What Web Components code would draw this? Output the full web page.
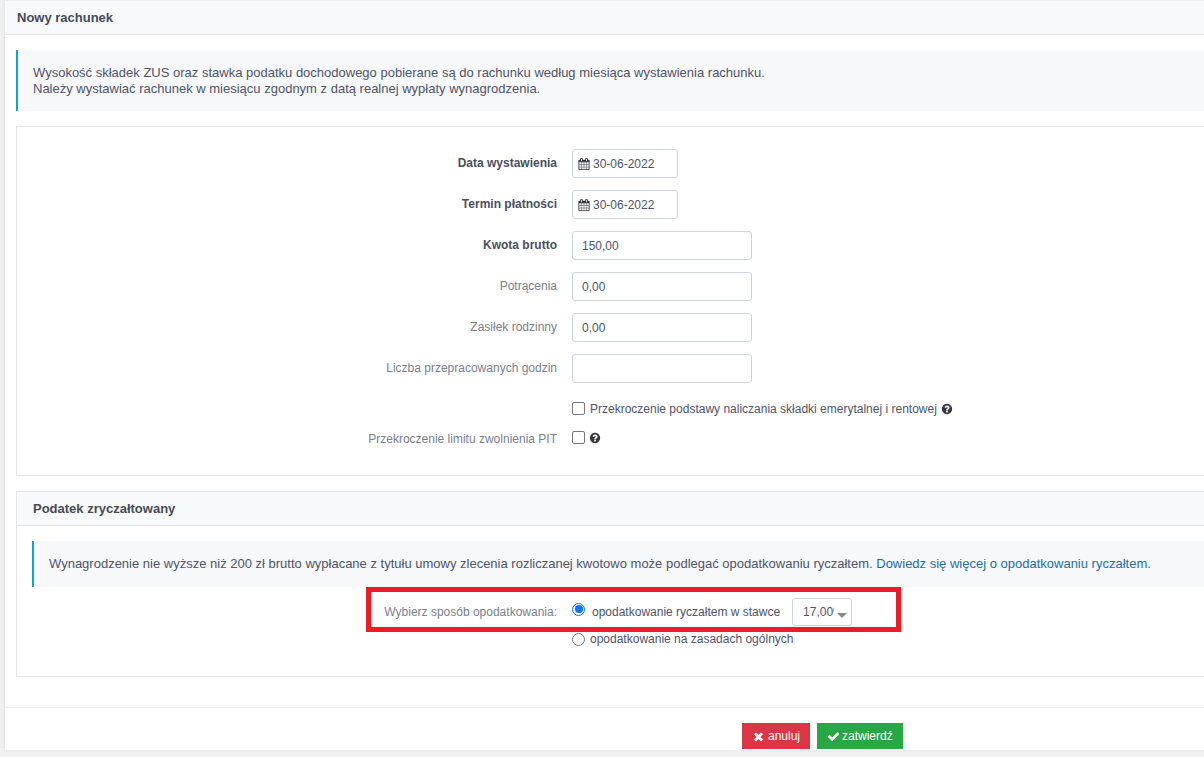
<!DOCTYPE html>
<html lang="pl">
<head>
<meta charset="utf-8">
<title>Nowy rachunek</title>
<style>
  html, body { margin: 0; height: 100%; overflow: hidden; background: #f0f0f0; }
  body { font: 12px "Liberation Sans", Arial, sans-serif; color: #4f5467; }
  a { color: #1f6f9f; text-decoration: none; }
</style>
</head>
<body>
<rachunek-card>
  <span slot="title">Nowy rachunek</span>
  <info-box style="margin-bottom:15px">Wysokość składek ZUS oraz stawka podatku dochodowego pobierane są do rachunku według miesiąca wystawienia rachunku.<br>Należy wystawiać rachunek w miesiącu zgodnym z datą realnej wypłaty wynagrodzenia.</info-box>

  <form-panel>
    <form-row label="Data wystawienia" strong><text-field date width="106">30-06-2022</text-field></form-row>
    <form-row label="Termin płatności" strong><text-field date width="106">30-06-2022</text-field></form-row>
    <form-row label="Kwota brutto" strong><text-field>150,00</text-field></form-row>
    <form-row label="Potrącenia"><text-field>0,00</text-field></form-row>
    <form-row label="Zasiłek rodzinny"><text-field>0,00</text-field></form-row>
    <form-row label="Liczba przepracowanych godzin"><text-field></text-field></form-row>
    <form-row check style="margin-top:18px"><check-box>Przekroczenie podstawy naliczania składki emerytalnej i rentowej</check-box></form-row>
    <form-row label="Przekroczenie limitu zwolnienia PIT" check last><check-box></check-box></form-row>
  </form-panel>

  <form-panel heading="Podatek zryczałtowany" style="margin-top:15px">
    <info-box compact>Wynagrodzenie nie wyższe niż 200 zł brutto wypłacane z tytułu umowy zlecenia rozliczanej kwotowo może podlegać opodatkowaniu ryczałtem. <a href="#">Dowiedz się więcej o opodatkowaniu ryczałtem.</a></info-box>
    <tax-choice></tax-choice>
  </form-panel>

  <action-button slot="footer" kind="cancel">anuluj</action-button>
  <action-button slot="footer" kind="ok">zatwierdź</action-button>
</rachunek-card>

<script>
(function () {
  const ICONS = {
    calendar: 'M192 1664h288v-288h-288v288zm352 0h320v-288h-320v288zm-352-352h288v-320h-288v320zm352 0h320v-320h-320v320zm-352-384h288v-288h-288v288zm736 736h320v-288h-320v288zm-384-736h320v-288h-320v288zm768 736h288v-288h-288v288zm-384-352h320v-320h-320v320zm-352-864v-288q0-13-9.5-22.5t-22.5-9.5h-64q-13 0-22.5 9.5t-9.5 22.5v288q0 13 9.5 22.5t22.5 9.5h64q13 0 22.5-9.5t9.5-22.5zm736 864h288v-320h-288v320zm-384-384h320v-288h-320v288zm384 0h288v-288h-288v288zm32-480v-288q0-13-9.5-22.5t-22.5-9.5h-64q-13 0-22.5 9.5t-9.5 22.5v288q0 13 9.5 22.5t22.5 9.5h64q13 0 22.5-9.5t9.5-22.5zm384-64v1280q0 52-38 90t-90 38h-1408q-52 0-90-38t-38-90v-1280q0-52 38-90t90-38h128v-96q0-66 47-113t113-47h64q66 0 113 47t47 113v96h384v-96q0-66 47-113t113-47h64q66 0 113 47t47 113v96h128q52 0 90 38t38 90z',
    question: 'M1024 1376v-192q0-14-9-23t-23-9h-192q-14 0-23 9t-9 23v192q0 14 9 23t23 9h192q14 0 23-9t9-23zm256-672q0-88-55.5-163t-138.5-116-170-41q-243 0-371 213-15 24 8 42l132 100q7 6 19 6 16 0 25-12 53-68 86-92 34-24 86-24 48 0 85.5 26t37.5 59q0 38-20 61t-68 45q-63 28-115.5 86.5t-52.5 125.5v36q0 14 9 23t23 9h192q14 0 23-9t9-23q0-19 21.5-49.5t54.5-49.5q32-18 49-28.5t46-35 44.5-48 28-60.5 12.5-81zm384 192q0 209-103 385.5t-279.5 279.5-385.5 103-385.5-103-279.5-279.5-103-385.5 103-385.5 279.5-279.5 385.5-103 385.5 103 279.5 279.5 103 385.5z',
    times: 'M1490 1322q0 40-28 68l-136 136q-28 28-68 28t-68-28l-294-294-294 294q-28 28-68 28t-68-28l-136-136q-28-28-28-68t28-68l294-294-294-294q-28-28-28-68t28-68l136-136q28-28 68-28t68 28l294 294 294-294q28-28 68-28t68 28l136 136q28 28 28 68t-28 68l-294 294 294 294q28 28 28 68z',
    check: 'M1671 566q0 40-28 68l-724 724-136 136q-28 28-68 28t-68-28l-136-136-362-362q-28-28-28-68t28-68l136-136q28-28 68-28t68 28l294 295 656-657q28-28 68-28t68 28l136 136q28 28 28 68z',
  }
  const icon = (name, size, color) =>
    `<svg width="${size}" height="${size}" viewBox="0 0 1792 1792" style="flex:none;display:block" aria-hidden="true"><path fill="${color || 'currentColor'}" d="${ICONS[name]}"/></svg>`

  class Base extends HTMLElement {
    constructor() {
      super()
      this.attachShadow({ mode: 'open' })
    }
    connectedCallback() { this.shadowRoot.innerHTML = this.render() }
  }

  class RachunekCard extends Base {
    render() {
      return `
        <style>
          :host { display:block; box-sizing:border-box; width:1230px; height:749px; margin:1px 0 0 5px; background:#fff; position:relative; overflow:hidden; box-shadow:-1px 0 3px rgba(0,0,0,.05); }
          .head { height:33px; display:flex; align-items:center; padding-left:12px; background:#f8f9fa; border-bottom:1px solid #e4e4e4; font-weight:700; color:#454a56; font-size:13px; }
          .body { padding:15px 11px 0; }
          .foot { position:absolute; left:0; right:0; top:706px; height:43px; border-top:1px solid #eeeeee; display:flex; gap:7px; padding:15px 0 0 737px; box-sizing:border-box; }
          .mark { position:absolute; left:361px; top:586px; width:535px; height:45px; box-sizing:border-box; border:5px solid #ed1c24; pointer-events:none; }
        </style>
        <div class="head"><slot name="title"></slot></div>
        <div class="body"><slot></slot></div>
        <div class="foot"><slot name="footer"></slot></div>
        <div class="mark"></div>`
    }
  }

  class InfoBox extends Base {
    render() {
      const compact = this.hasAttribute('compact')
      return `
        <style>
          :host { display:block; box-sizing:border-box; background:#f7f8fa; border-left:2px solid #0aa5e0; color:#4f5467; font-size:13px; line-height:16px; padding:15px; height:${compact ? 46 : 61}px; }
        </style>
        <slot></slot>`
    }
  }

  class FormPanel extends Base {
    render() {
      const heading = this.getAttribute('heading')
      return `
        <style>
          :host { display:block; box-sizing:border-box; border:1px solid #e4e4e4; background:#fff; height:${heading ? 186 : 350}px; }
          .head { height:33px; display:flex; align-items:center; padding-left:16px; background:#f8f9fa; border-bottom:1px solid #e4e4e4; font-weight:700; font-size:13px; color:#454a56; }
          .body { padding:${heading ? '15px 15px 0' : '22px 0 0'}; }
        </style>
        ${heading ? `<div class="head">${heading}</div>` : ''}
        <div class="body"><slot></slot></div>`
    }
  }

  class FormRow extends Base {
    render() {
      const strong = this.hasAttribute('strong')
      const check = this.hasAttribute('check')
      const last = this.hasAttribute('last')
      return `
        <style>
          :host { display:grid; grid-template-columns:540px 1fr; column-gap:15px; align-items:center; margin-bottom:${check ? (last ? 0 : 14) : 12}px; min-height:${check ? 15 : 29}px; }
          .label { text-align:right; color:${strong ? '#4a4f5c' : '#7a7f8c'}; font-weight:${strong ? 700 : 400}; position:relative; top:${check ? 1 : -1}px; }
        </style>
        <div class="label">${this.getAttribute('label') || ''}</div>
        <div><slot></slot></div>`
    }
  }

  class TextField extends Base {
    render() {
      const w = this.getAttribute('width') || 180
      const date = this.hasAttribute('date')
      return `
        <style>
          :host { display:flex; align-items:center; gap:3px; box-sizing:border-box; width:${w}px; height:29px; border:1px solid #ced4da; border-radius:3px; background:#fff; color:#4f5467; padding:0 0 0 ${date ? 5 : 9}px; }
        </style>
        ${date ? icon('calendar', 12, '#33363d') : ''}<span><slot></slot></span>`
    }
  }

  class CheckBox extends Base {
    render() {
      const hasText = this.textContent.trim() !== ''
      return `
        <style>
          :host { display:flex; align-items:center; color:#4f5467; }
          .box { width:11px; height:11px; border:1px solid #767676; border-radius:2px; background:#fff; flex:none; margin-right:${hasText ? 5 : 4}px; }
          .txt { margin-right:${hasText ? 4 : 0}px; }
        </style>
        <span class="box"></span><span class="txt"><slot></slot></span>${icon('question', 12, '#33363d')}`
    }
  }

  class TaxChoice extends Base {
    render() {
      return `
        <style>
          :host { display:grid; grid-template-columns:525px 1fr; column-gap:15px; margin-top:10px; color:#4f5467; }
          .label { text-align:right; color:#7a7f8c; line-height:28px; margin-top:1px; }
          .line { display:flex; align-items:center; gap:7px; }
          .line.first { height:28px; margin-top:1px; }
          .line.second { margin-top:6px; height:14px; gap:5px; }
          .radio { width:11px; height:11px; border:1px solid #767676; border-radius:50%; background:#fff; flex:none; box-sizing:content-box; }
          .radio.on { border-color:#0075ff; position:relative; margin-top:-6px; }
          .radio.on::after { content:""; position:absolute; left:1.5px; top:1.5px; width:8px; height:8px; border-radius:50%; background:#0075ff; }
          .sel { box-sizing:border-box; width:60px; height:28px; margin-left:5px; border:1px solid #ced4da; border-radius:3px; display:flex; align-items:center; padding-left:10px; position:relative; }
          .val { width:31px; overflow:hidden; white-space:nowrap; }
          .caret { position:absolute; right:4px; top:14px; width:0; height:0; border:5px solid transparent; border-top:5px solid #888; border-bottom:0; }
        </style>
        <div class="label">Wybierz sposób opodatkowania:</div>
        <div>
          <div class="line first"><span class="radio on"></span><span>opodatkowanie ryczałtem w stawce</span><span class="sel"><span class="val">17,00%</span><span class="caret"></span></span></div>
          <div class="line second"><span class="radio"></span><span>opodatkowanie na zasadach ogólnych</span></div>
        </div>`
    }
  }

  class ActionButton extends Base {
    render() {
      const ok = this.getAttribute('kind') === 'ok'
      return `
        <style>
          :host { display:inline-flex; align-items:center; gap:${ok ? 2 : 3}px; box-sizing:border-box; height:26px; padding:0 10px; background:${ok ? '#28a745' : '#dc3545'}; color:#fff; font-size:12px; }
        </style>
        ${icon(ok ? 'check' : 'times', 13)}<span><slot></slot></span>`
    }
  }

  const defs = {
    'rachunek-card': RachunekCard, 'info-box': InfoBox, 'form-panel': FormPanel, 'form-row': FormRow,
    'text-field': TextField, 'check-box': CheckBox, 'tax-choice': TaxChoice, 'action-button': ActionButton,
  }
  Object.keys(defs).forEach((k) => customElements.define(k, defs[k]))
})()
</script>
</body>
</html>
